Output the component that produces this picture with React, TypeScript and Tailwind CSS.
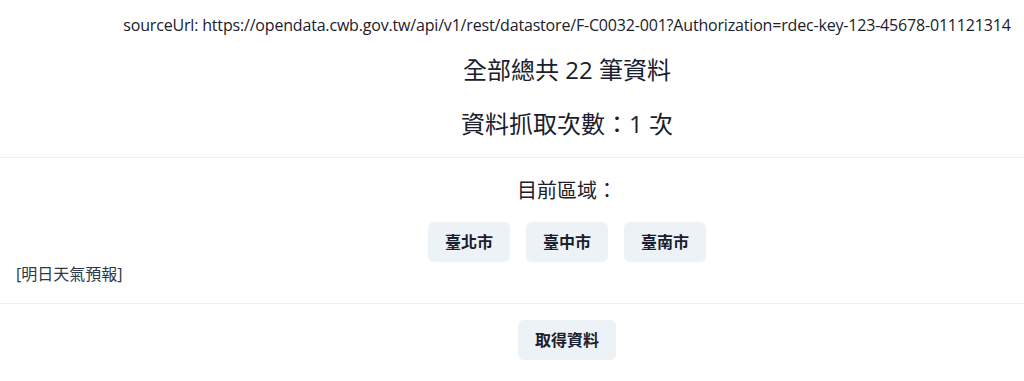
const FONT = "font-['Open_Sans','Noto_Sans_CJK_TC',sans-serif]"

const CITIES = ["臺北市", "臺中市", "臺南市"]

function GrayButton({ label }: { label: string }) {
  return (
    <button className="h-10 rounded-md bg-[#edf2f7] px-[17px] text-base font-semibold text-[#1a202c]">
      {label}
    </button>
  )
}

export default function App() {
  return (
    <div className="h-screen w-full overflow-hidden bg-white">
      <div className={`${FONT} w-[1134px] text-[#1a202c]`}>
        <div className="flex h-[50px] items-center justify-center text-base tracking-[-0.18px]">
          sourceUrl: https://opendata.cwb.gov.tw/api/v1/rest/datastore/F-C0032-001?Authorization=rdec-key-123-45678-011121314
        </div>

        <div className="flex flex-col items-center">
          <h2 className="flex h-10 items-center text-2xl">全部總共 22 筆資料</h2>
          <h2 className="mt-[14px] flex h-10 items-center text-2xl">資料抓取次數：1 次</h2>
        </div>

        <hr className="mt-[13px] border-[#edf0f3]" />

        <div className="flex flex-col items-center pt-[19px]">
          <p className="flex h-7 items-center text-xl">目前區域：</p>
          <div className="mt-[17px] flex gap-4">
            {CITIES.map((c) => (
              <GrayButton key={c} label={c} />
            ))}
          </div>
        </div>
        <p className="flex h-6 items-center pl-4 text-base text-[#2d3748]">[明日天氣預報]</p>

        <hr className="mt-[17px] border-[#edf0f3]" />

        <div className="flex justify-center pt-[16px]">
          <GrayButton label="取得資料" />
        </div>
      </div>
    </div>
  )
}
